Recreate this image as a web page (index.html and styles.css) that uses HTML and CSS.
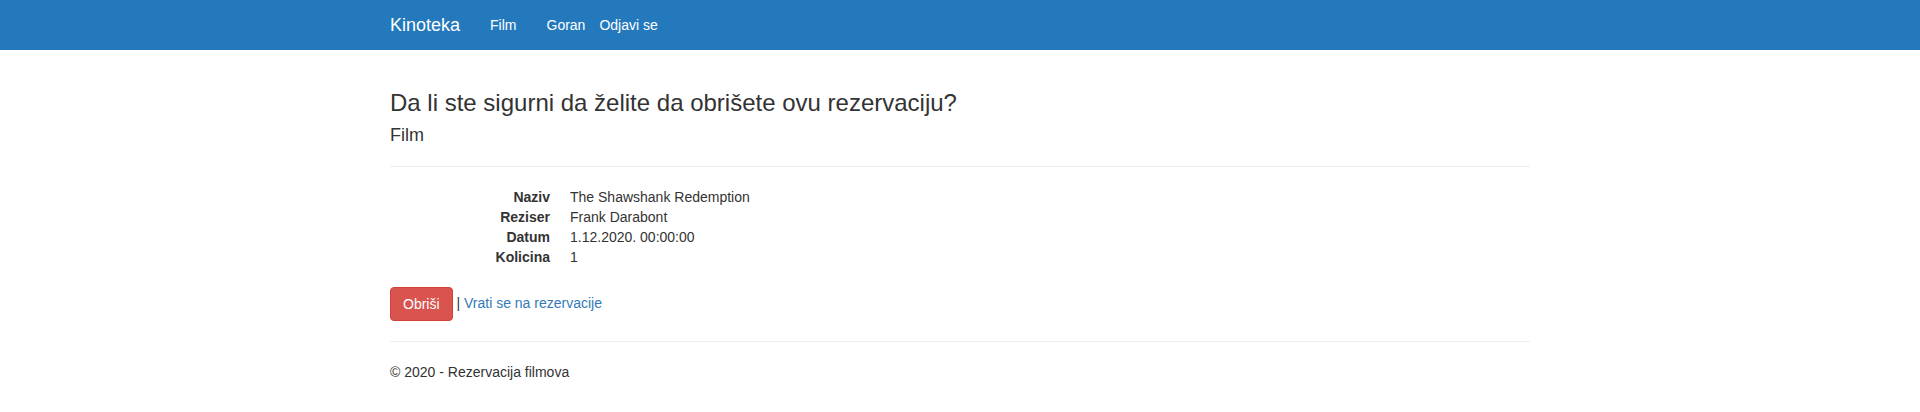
FILE: index.html
```html
<!DOCTYPE html>
<html lang="sr">
<head>
<meta charset="utf-8">
<title>Kinoteka</title>
<link rel="stylesheet" href="styles.css">
</head>
<body>
<header class="navbar">
  <div class="container nav-inner">
    <a class="brand" href="#">Kinoteka</a>
    <ul class="nav">
      <li><a href="#">Film</a></li>
    </ul>
    <ul class="nav nav-user">
      <li><a href="#" class="user">Goran</a></li>
      <li><a href="#" class="logout">Odjavi se</a></li>
    </ul>
  </div>
</header>
<main class="container body-content">
  <h3 class="title">Da li ste sigurni da želite da obrišete ovu rezervaciju?</h3>
  <div>
    <h4 class="subtitle">Film</h4>
    <hr class="rule">
    <dl class="details">
      <dt>Naziv</dt><dd>The Shawshank Redemption</dd>
      <dt>Reziser</dt><dd>Frank Darabont</dd>
      <dt>Datum</dt><dd>1.12.2020. 00:00:00</dd>
      <dt>Kolicina</dt><dd>1</dd>
    </dl>
    <form class="actions">
      <button type="button" class="btn-danger">Obriši</button> |
      <a href="#" class="link">Vrati se na rezervacije</a>
    </form>
  </div>
  <hr class="rule">
  <footer class="footer">
    <p>© 2020 - Rezervacija filmova</p>
  </footer>
</main>
</body>
</html>
```
FILE: styles.css
```css
* { box-sizing: border-box; }
html, body { margin: 0; padding: 0; }
body {
  font-family: "Liberation Sans", Arial, Helvetica, sans-serif;
  font-size: 14px;
  line-height: 20px;
  color: #333;
  background: #fff;
  padding-bottom: 20px;
}
.container {
  width: 1170px;
  margin: 0 auto;
  padding: 0 15px;
}
.navbar {
  background: #2479bd;
  height: 50px;
}
.nav-inner {
  display: flex;
  align-items: stretch;
  height: 50px;
}
.brand {
  display: block;
  margin-left: -15px;
  padding: 15px;
  font-size: 18px;
  line-height: 20px;
  color: #fff;
  text-decoration: none;
}
.nav {
  list-style: none;
  margin: 0;
  padding: 0;
  display: flex;
}
.nav a {
  display: block;
  padding: 15px;
  line-height: 20px;
  font-size: 14px;
  color: #fff;
  text-decoration: none;
}
.nav-user .user { padding-right: 14px; }
.nav-user .logout { padding-left: 0; }
.body-content {
  padding-top: 20px;
}
.title {
  margin: 20px 0 10px;
  font-size: 24px;
  font-weight: 500;
  line-height: 26.4px;
}
.subtitle {
  margin: 10px 0;
  font-size: 18px;
  font-weight: 500;
  line-height: 19.8px;
}
.rule {
  margin: 20px 0;
  border: 0;
  border-top: 1px solid #eee;
  height: 0;
}
.details {
  margin: 0 0 20px;
  display: grid;
  grid-template-columns: 160px 1fr;
  column-gap: 20px;
}
.details dt {
  font-weight: 700;
  text-align: right;
}
.details dd { margin: 0; }
.actions { margin: 0; }
.btn-danger {
  font-family: inherit;
  font-size: 14px;
  line-height: 20px;
  padding: 6px 12px;
  color: #fff;
  background: #d9534f;
  border: 1px solid #d43f3a;
  border-radius: 4px;
  cursor: pointer;
  vertical-align: middle;
}
.link {
  color: #337ab7;
  text-decoration: none;
}
.footer p { margin: 0 0 10px; }
```
